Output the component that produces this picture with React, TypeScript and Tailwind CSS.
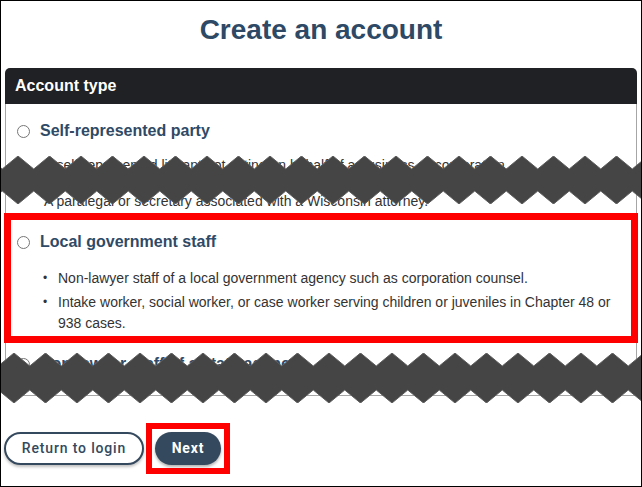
import React from "react";

function Radio() {
  return <span className="inline-block h-[13px] w-[13px] shrink-0 rounded-full border border-[#767676] bg-white" />;
}

function Bullet({ children, className = "" }: { children: React.ReactNode; className?: string }) {
  return (
    <li className={`flex leading-[21px] ${className}`}>
      <span className="w-[17px] shrink-0 pl-[2px] text-[12px]">•</span>
      <span>{children}</span>
    </li>
  );
}

// torn-edge band drawn over the screenshot
function Zigzag({ top, height, period, first }: { top: number; height: number; period: number; first: number }) {
  const tooth = 13;
  const pts: string[] = [];
  const start = first - period * 2;
  const peaks: number[] = [];
  for (let x = start; x < 642 + period * 2; x += period) peaks.push(x);
  peaks.forEach((x) => {
    pts.push(`${x},0`);
    pts.push(`${x + period / 2},${tooth}`);
  });
  [...peaks].reverse().forEach((x) => {
    pts.push(`${x + period / 2},${height - tooth}`);
    pts.push(`${x},${height}`);
  });
  return (
    <svg
      className="pointer-events-none absolute left-0"
      style={{ top }}
      width={642}
      height={height}
      viewBox={`0 0 642 ${height}`}
    >
      <polygon points={pts.join(" ")} fill="#454545" stroke="#5c5c5c" strokeWidth={1} />
    </svg>
  );
}

export default function App() {
  return (
    <div className="relative box-border h-[487px] w-[642px] overflow-hidden border border-black bg-white font-['Liberation_Sans',Arial,sans-serif]">
      <h1 className="mt-[13px] text-center text-[28px] font-bold leading-[32px] text-[#2d4965]">Create an account</h1>

      <div className="mx-[4px] mt-[22px]">
        <div className="flex h-[36px] items-center rounded-t-[5px] bg-[#202124] px-[10px] text-[16px] font-bold text-white">
          Account type
        </div>
        <div className="border border-t-0 border-[#a6a6a6]">
          <div className="px-[11px] pt-[15px]">
            <div className="flex h-[24px] items-center gap-[10px]">
              <Radio />
              <span className="text-[16px] font-bold text-[#2f4a66]">Self-represented party</span>
            </div>
            <div className="mt-[12px] pl-[27px] text-[14px] leading-[21px] text-[#333]">
              <p className="mb-[15px]">A self-represented litigant not acting on behalf of a business or corporation.</p>
              <p>A paralegal or secretary associated with a Wisconsin attorney.</p>
            </div>
          </div>

          <div className="-mx-[2px] mt-[1px] border-[7px] border-[#ff0000] pb-[2px] pl-[6px] pr-[6px] pt-[10px]">
            <div className="flex h-[24px] items-center gap-[10px]">
              <Radio />
              <span className="text-[16px] font-bold text-[#2f4a66]">Local government staff</span>
            </div>
            <ul className="mt-[14px] pl-[24px] text-[14px] text-[#333]">
              <Bullet className="mb-[3px]">
                Non-lawyer staff of a local government agency such as corporation counsel.
              </Bullet>
              <Bullet>
                Intake worker, social worker, or case worker serving children or juveniles in Chapter 48 or 938 cases.
              </Bullet>
            </ul>
          </div>

          <div className="px-[11px] pb-[19px] pt-[9px]">
            <div className="flex h-[24px] items-center gap-[10px]">
              <Radio />
              <span className="text-[16px] font-bold text-[#2f4a66]">Non-lawyer staff of a state agency</span>
            </div>
          </div>
        </div>
      </div>

      <div className="ml-[3px] mt-[27px] flex items-center gap-[2px] font-['Roboto',Arial,sans-serif]">
        <button className="h-[33px] w-[140px] rounded-full border-2 border-[#34495e] bg-white text-[14px] font-medium tracking-[0.06em] text-[#34495e] shadow-[0_2px_3px_rgba(0,0,0,0.25)]">
          Return to login
        </button>
        <div className="border-[6px] border-[#ff0000] bg-white p-[3px]">
          <button className="h-[33px] w-[66px] rounded-full bg-[#34495e] text-[14px] font-bold tracking-[0.06em] text-white shadow-[0_2px_3px_rgba(0,0,0,0.3)]">
            Next
          </button>
        </div>
      </div>

      <Zigzag top={155} height={48} period={31.5} first={17} />
      <Zigzag top={352} height={50} period={31.5} first={13} />
    </div>
  );
}
